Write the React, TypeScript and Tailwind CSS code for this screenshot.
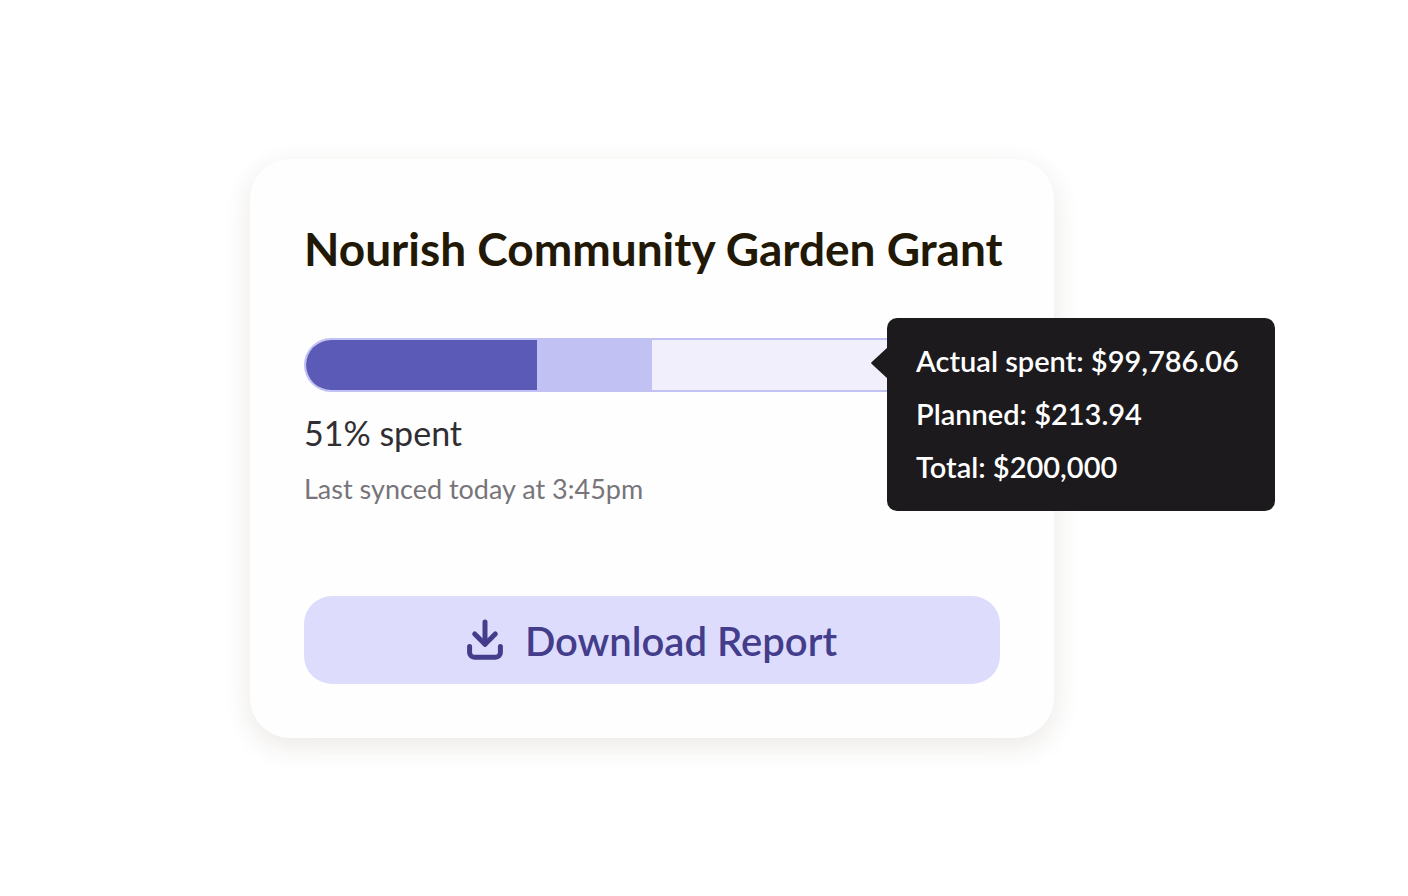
const spending = [
  { label: "Actual spent", amount: "$99,786.06" },
  { label: "Planned", amount: "$213.94" },
  { label: "Total", amount: "$200,000" },
];

function DownloadIcon() {
  return (
    <svg
      width="36"
      height="41"
      viewBox="0 0 36 41"
      fill="none"
      stroke="currentColor"
      strokeWidth="5"
      strokeLinecap="round"
      strokeLinejoin="round"
      aria-hidden="true"
    >
      <path d="M18 3V25" />
      <path d="M7.7 15L18 25.3l10.3-10.3" />
      <path d="M2.6 27.5v6a4.7 4.7 0 0 0 4.7 4.7h21.4a4.7 4.7 0 0 0 4.7-4.7v-6" />
    </svg>
  );
}

function SpendingTooltip() {
  return (
    <div
      role="tooltip"
      className="absolute -top-5 left-[583px] rounded-[10px] bg-[#1c1a1d] pt-4 pr-9 pb-[18px] pl-[29px] text-[29px] leading-[53px] font-semibold whitespace-nowrap text-white"
    >
      <svg
        className="absolute top-[29px] -left-4"
        width="17"
        height="32"
        viewBox="0 0 17 32"
        aria-hidden="true"
      >
        <path d="M17 0L0.5 15.3a1 1 0 0 0 0 1.4L17 32z" fill="#1c1a1d" />
      </svg>
      {spending.map((item) => (
        <p key={item.label}>
          {item.label}: {item.amount}
        </p>
      ))}
    </div>
  );
}

function ProgressBar() {
  return (
    <div className="relative mt-[61px]">
      <div className="flex h-[54px] overflow-hidden rounded-full border-2 border-[#c2c1f4] bg-[#f1effb]">
        <div className="w-1/3 bg-[#5b5bb7]" />
        <div className="w-1/6 bg-[#c2c1f4]" />
      </div>
      <SpendingTooltip />
    </div>
  );
}

function App() {
  return (
    <main className="flex min-h-screen items-center justify-center bg-white pr-26 font-['Lato',sans-serif]">
      <section className="w-full max-w-[804px] rounded-[40px] bg-[#fefefe] px-[54px] pt-[62px] pb-[54px] shadow-[0_8px_28px_rgba(60,50,20,0.11)]">
        <h1 className="text-[46px] leading-14 font-bold whitespace-nowrap text-[#211805]">
          Nourish Community Garden Grant
        </h1>
        <ProgressBar />
        <p className="mt-[19px] text-[34px] leading-11 text-[#302e33]">
          51% spent
        </p>
        <p className="mt-4 text-[27px] leading-9 text-[#77757a]">
          Last synced today at 3:45pm
        </p>
        <button
          type="button"
          className="mt-[89px] flex h-22 w-full items-center justify-center gap-[22px] rounded-[28px] bg-[#dedcfc] text-[40px] font-semibold text-[#433d8b]"
        >
          <DownloadIcon />
          <span className="pt-[2px]">Download Report</span>
        </button>
      </section>
    </main>
  );
}
export default App;
